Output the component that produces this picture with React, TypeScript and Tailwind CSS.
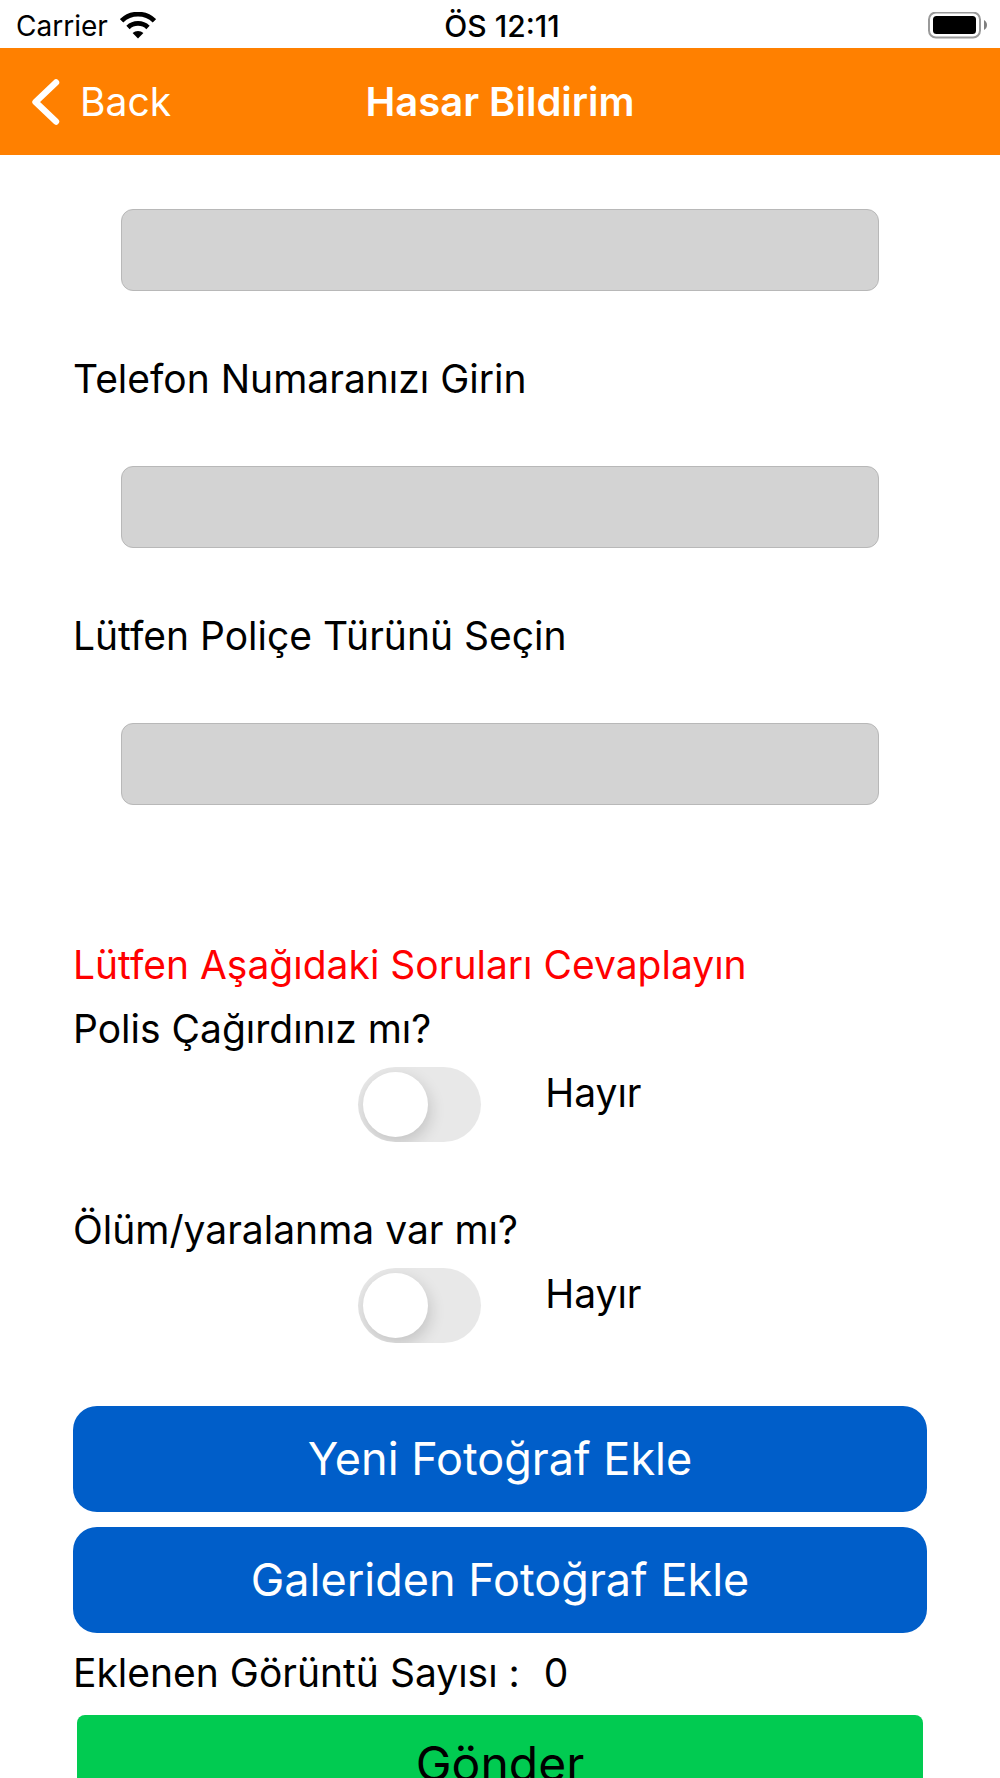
import { useState } from "react";

function StatusBar() {
  return (
    <div className="grid h-12 shrink-0 grid-cols-3 items-center bg-white pt-1 pr-3 pl-4 text-[28px] leading-10">
      <div className="flex items-center gap-3">
        <span>Carrier</span>
        <svg className="h-7 w-9" viewBox="0 0 36 28" fill="none" aria-hidden="true">
          <path d="M1.6 8.8a23.5 23.5 0 0 1 32.8 0" stroke="#000" strokeWidth="4.8" />
          <path d="M8 15.4a14.6 14.6 0 0 1 20 0" stroke="#000" strokeWidth="4.8" />
          <path d="M18 26.4l-5.4-5.3a8 8 0 0 1 10.8 0z" fill="#000" />
        </svg>
      </div>
      <span className="text-center text-[30px] font-medium">ÖS 12:11</span>
      <svg className="h-7 w-[60px] justify-self-end" viewBox="0 0 60 28" aria-label="Battery full">
        <rect x="1" y="0.5" width="51" height="25" rx="7" fill="#fff" stroke="#9a9a9a" strokeWidth="2" />
        <rect x="5" y="4" width="43" height="18" rx="3.5" fill="#000" />
        <path d="M56 8c4 2 4 8 0 10z" fill="#7f7f7f" />
      </svg>
    </div>
  );
}

function Header() {
  return (
    <header className="grid h-[107px] shrink-0 grid-cols-3 items-center bg-[#ff8000] px-8 text-[39px] leading-[64px] text-white">
      <button type="button" className="flex items-center gap-5 justify-self-start">
        <svg className="h-12 w-7" viewBox="0 0 28 48" fill="none" aria-hidden="true">
          <path d="M24 4.5L3.5 24 24 43.5" stroke="currentColor" strokeWidth="6.4" strokeLinecap="round" strokeLinejoin="round" />
        </svg>
        <span>Back</span>
      </button>
      <h1 className="text-center text-[40px] font-semibold whitespace-nowrap">Hasar Bildirim</h1>
    </header>
  );
}

const fieldClass =
  "block h-[82px] w-full appearance-none rounded-xl border border-[#b8b8b8] bg-[#d3d3d3] px-4 outline-none";

function Question({ id, text }: { id: string; text: string }) {
  const [on, setOn] = useState(false);
  return (
    <div className="pb-[56px]">
      <label htmlFor={id} className="block">
        {text}
      </label>
      <div className="grid grid-cols-[31fr_29fr] gap-x-16">
        <span className="relative mt-[6px] block h-[75px] w-[123px] justify-self-end">
          <input
            id={id}
            type="checkbox"
            role="switch"
            checked={on}
            onChange={(e) => setOn(e.target.checked)}
            className="peer block h-full w-full appearance-none rounded-full bg-[#e8e8e8] checked:bg-[#34c759]"
          />
          <span className="pointer-events-none absolute inset-0 overflow-hidden rounded-full p-[5px] peer-checked:pl-[53px]">
            <span className="block size-[65px] rounded-full bg-white shadow-[2px_6px_16px_rgba(0,0,0,0.16)]" />
          </span>
        </span>
        <span>{on ? "Evet" : "Hayır"}</span>
      </div>
    </div>
  );
}

function PhotoButton({ text }: { text: string }) {
  return (
    <button
      type="button"
      className="block h-[106px] w-full rounded-3xl bg-[#005ec9] text-[45px] leading-[64px] text-white"
    >
      {text}
    </button>
  );
}

export default function App() {
  return (
    <div className="flex h-screen flex-col overflow-hidden bg-white font-['Inter',sans-serif] text-black">
      <StatusBar />
      <Header />
      <main className="min-h-0 flex-1 overflow-y-auto px-[73px] pt-[54px] text-[39px] leading-[64px] [scrollbar-width:none]">
        <form onSubmit={(e) => e.preventDefault()}>
          <div className="px-12">
            <input type="text" aria-label="Ad Soyad" className={fieldClass} />
          </div>
          <label htmlFor="phone" className="mt-14 block">
            Telefon Numaranızı Girin
          </label>
          <div className="mt-[55px] px-12">
            <input id="phone" type="tel" className={fieldClass} />
          </div>
          <label htmlFor="policy" className="mt-14 block">
            Lütfen Poliçe Türünü Seçin
          </label>
          <div className="mt-[55px] px-12">
            <select id="policy" defaultValue="" className={fieldClass}>
              <option value="" />
              <option value="trafik">Trafik</option>
              <option value="kasko">Kasko</option>
            </select>
          </div>
          <h2 className="mt-32 text-[#ff0000]">Lütfen Aşağıdaki Soruları Cevaplayın</h2>
          <Question id="police" text="Polis Çağırdınız mı?" />
          <Question id="injury" text="Ölüm/yaralanma var mı?" />
          <div className="mt-[7px] flex flex-col gap-[15px]">
            <PhotoButton text="Yeni Fotoğraf Ekle" />
            <PhotoButton text="Galeriden Fotoğraf Ekle" />
          </div>
          <p className="mt-2 flex gap-6">
            <span>Eklenen Görüntü Sayısı :</span>
            <span>0</span>
          </p>
          <div className="mt-[10px] px-1 pb-10">
            <button type="submit" className="block h-[98px] w-full rounded-lg bg-[#01cb51] text-5xl leading-[64px]">
              Gönder
            </button>
          </div>
        </form>
      </main>
    </div>
  );
}
